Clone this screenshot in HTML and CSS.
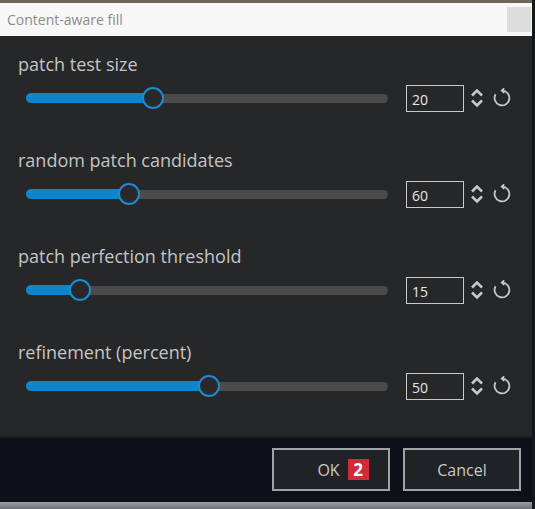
FILE: index.html
```html
<!DOCTYPE html>
<html lang="en">
<head>
    <meta charset="UTF-8">
    <title>Content-aware fill</title>
    <link rel="stylesheet" href="styles.css">
</head>
<body>
    <div class="dialog">
        <div class="top-edge"></div>
        <div class="title-bar">
            <span class="title">Content-aware fill</span>
            <span class="close-box"></span>
        </div>

        <div class="settings">
            <div class="setting">
                <div class="setting-label">patch test size</div>
                <div class="setting-controls">
                    <div class="slider">
                        <div class="slider-track"></div>
                        <div class="slider-fill" style="width: 35%"></div>
                        <div class="slider-knob" style="left: 35%"></div>
                    </div>
                    <input class="value-box" type="text" value="20" readonly>
                    <svg class="spin-icon" width="16" height="22" viewBox="0 0 16 22"><path d="M3 8.5 L8 3.5 L13 8.5 M3 13.5 L8 18.5 L13 13.5"/></svg>
                    <svg class="reset-icon" width="20" height="20" viewBox="0 0 20 20"><path d="M10 2.6 A7.4 7.4 0 1 1 3.6 6.3 M12.2 0.4 L9.8 2.6 L12.2 4.8"/></svg>
                </div>
            </div>

            <div class="setting">
                <div class="setting-label">random patch candidates</div>
                <div class="setting-controls">
                    <div class="slider">
                        <div class="slider-track"></div>
                        <div class="slider-fill" style="width: 28.5%"></div>
                        <div class="slider-knob" style="left: 28.5%"></div>
                    </div>
                    <input class="value-box" type="text" value="60" readonly>
                    <svg class="spin-icon" width="16" height="22" viewBox="0 0 16 22"><path d="M3 8.5 L8 3.5 L13 8.5 M3 13.5 L8 18.5 L13 13.5"/></svg>
                    <svg class="reset-icon" width="20" height="20" viewBox="0 0 20 20"><path d="M10 2.6 A7.4 7.4 0 1 1 3.6 6.3 M12.2 0.4 L9.8 2.6 L12.2 4.8"/></svg>
                </div>
            </div>

            <div class="setting">
                <div class="setting-label">patch perfection threshold</div>
                <div class="setting-controls">
                    <div class="slider">
                        <div class="slider-track"></div>
                        <div class="slider-fill" style="width: 15%"></div>
                        <div class="slider-knob" style="left: 15%"></div>
                    </div>
                    <input class="value-box" type="text" value="15" readonly>
                    <svg class="spin-icon" width="16" height="22" viewBox="0 0 16 22"><path d="M3 8.5 L8 3.5 L13 8.5 M3 13.5 L8 18.5 L13 13.5"/></svg>
                    <svg class="reset-icon" width="20" height="20" viewBox="0 0 20 20"><path d="M10 2.6 A7.4 7.4 0 1 1 3.6 6.3 M12.2 0.4 L9.8 2.6 L12.2 4.8"/></svg>
                </div>
            </div>

            <div class="setting">
                <div class="setting-label">refinement (percent)</div>
                <div class="setting-controls">
                    <div class="slider">
                        <div class="slider-track"></div>
                        <div class="slider-fill" style="width: 50.5%"></div>
                        <div class="slider-knob" style="left: 50.5%"></div>
                    </div>
                    <input class="value-box" type="text" value="50" readonly>
                    <svg class="spin-icon" width="16" height="22" viewBox="0 0 16 22"><path d="M3 8.5 L8 3.5 L13 8.5 M3 13.5 L8 18.5 L13 13.5"/></svg>
                    <svg class="reset-icon" width="20" height="20" viewBox="0 0 20 20"><path d="M10 2.6 A7.4 7.4 0 1 1 3.6 6.3 M12.2 0.4 L9.8 2.6 L12.2 4.8"/></svg>
                </div>
            </div>
        </div>

        <div class="footer">
            <button class="dlg-btn ok-btn">OK <span class="badge">2</span></button>
            <button class="dlg-btn">Cancel</button>
        </div>
        <div class="bottom-edge"></div>
    </div>
</body>
</html>
```

FILE: styles.css
```css
body {
    margin: 0;
    background: #262729;
    font-family: "Open Sans", "DejaVu Sans", sans-serif;
}

.dialog {
    width: 535px;
    height: 509px;
    display: flex;
    flex-direction: column;
    box-sizing: border-box;
    border-right: 3px solid #15161a;
    overflow: hidden;
}

.top-edge {
    height: 3px;
    background: #6e655c;
}

.title-bar {
    height: 33px;
    background: #f7f7f7;
    display: flex;
    align-items: center;
    justify-content: space-between;
    padding-left: 7px;
    padding-right: 1px;
}

.title {
    font-size: 14px;
    color: #8c8c8c;
}

.close-box {
    width: 24px;
    height: 25px;
    background: #dcdcdc;
}

.settings {
    height: 400px;
    box-sizing: border-box;
    background: #262729;
    padding: 16px 0 0 0;
    display: flex;
    flex-direction: column;
    gap: 36px;
}

.setting-label {
    height: 24px;
    line-height: 24px;
    padding-left: 18px;
    font-size: 18px;
    color: #c4c4c4;
}

.setting-controls {
    margin-top: 8px;
    height: 28px;
    display: flex;
    align-items: center;
    padding-left: 26px;
}

.slider {
    position: relative;
    width: 362px;
    height: 24px;
}

.slider-track {
    position: absolute;
    left: 0;
    right: 0;
    top: 8px;
    height: 9px;
    border-radius: 5px;
    background: #4b4b4c;
}

.slider-fill {
    position: absolute;
    left: 0;
    top: 7px;
    height: 10px;
    border-radius: 5px;
    background: #0b86cd;
}

.slider-knob {
    position: absolute;
    top: 1px;
    width: 22px;
    height: 22px;
    margin-left: -11px;
    box-sizing: border-box;
    border-radius: 50%;
    border: 2px solid #1b8ccf;
    background: #28292b;
}

.value-box {
    margin-left: 18px;
    width: 58px;
    height: 27px;
    box-sizing: border-box;
    border: 1px solid #c9c9c9;
    background: #262729;
    color: #e6e6e6;
    font-family: "Open Sans", sans-serif;
    font-size: 14px;
    padding: 2px 0 0 5px;
    outline: none;
}

.spin-icon {
    margin-left: 5px;
    fill: none;
    stroke: #c8c8c8;
    stroke-width: 2.6;
}

.reset-icon {
    margin-left: 7px;
    fill: none;
    stroke: #c8c8c8;
    stroke-width: 1.8;
}

.footer {
    height: 66px;
    box-sizing: border-box;
    background: #0e1019;
    border-top: 2px solid #1b1c21;
    display: flex;
    justify-content: flex-end;
    padding: 10px 11px 0 0;
    gap: 13px;
}

.dlg-btn {
    width: 118px;
    height: 43px;
    border: 2px solid #9ea3a7;
    background: #212226;
    color: #c6c9ca;
    font-family: "Open Sans", sans-serif;
    font-size: 16px;
    display: flex;
    align-items: center;
    justify-content: center;
    gap: 8px;
    padding: 0;
}

.ok-btn {
    padding-left: 24px;
}

.badge {
    background: #d12a38;
    color: #ffffff;
    font-weight: bold;
    font-size: 17px;
    width: 21px;
    height: 21px;
    line-height: 21px;
    text-align: center;
}

.bottom-edge {
    height: 7px;
    background: linear-gradient(#9aa0a2, #6c7274);
}
```
